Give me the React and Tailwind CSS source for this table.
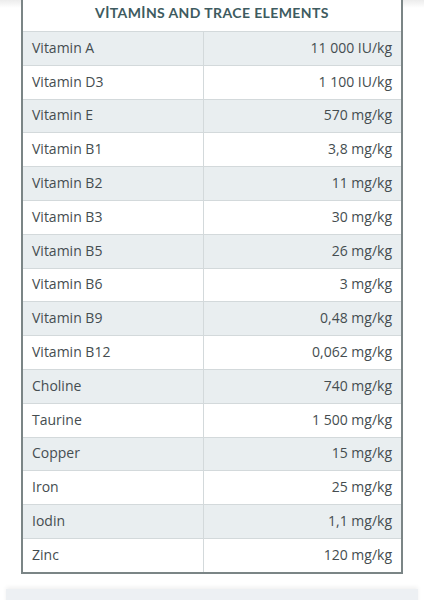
const rows = [
  ["Vitamin A", "11 000 IU/kg"],
  ["Vitamin D3", "1 100 IU/kg"],
  ["Vitamin E", "570 mg/kg"],
  ["Vitamin B1", "3,8 mg/kg"],
  ["Vitamin B2", "11 mg/kg"],
  ["Vitamin B3", "30 mg/kg"],
  ["Vitamin B5", "26 mg/kg"],
  ["Vitamin B6", "3 mg/kg"],
  ["Vitamin B9", "0,48 mg/kg"],
  ["Vitamin B12", "0,062 mg/kg"],
  ["Choline", "740 mg/kg"],
  ["Taurine", "1 500 mg/kg"],
  ["Copper", "15 mg/kg"],
  ["Iron", "25 mg/kg"],
  ["Iodin", "1,1 mg/kg"],
  ["Zinc", "120 mg/kg"],
];

export default function App() {
  return (
    <div className="w-[424px] h-[600px] overflow-hidden bg-white">
      <div className="h-[8px] -mb-[8px] bg-gradient-to-b from-[#ececec] to-white" />
      <div className="ml-[21px] w-[382px] border-x-2 border-b-2 border-[#7b8586] bg-white relative">
        <div
          className="h-[31px] flex items-center justify-center pb-[7px] text-[14px] font-bold tracking-[0.4px] text-[#3e5b60] uppercase"
          style={{ fontFamily: "Lato, sans-serif" }}
        >
          Vİtamİns and trace elements
        </div>
        {rows.map(([name, value], i) => (
          <div
            key={name}
            className={`flex h-[33.8px] border-t border-[#d3d9db] text-[14px] text-[#454d50] ${
              i % 2 === 0 ? "bg-[#e9eef0]" : "bg-white"
            }`}
            style={{ fontFamily: "'Open Sans', sans-serif" }}
          >
            <div className="w-[181px] flex items-center pl-[9px] pb-[2px] border-r border-[#d3d9db]">
              {name}
            </div>
            <div className="flex-1 flex items-center justify-end pr-[9px] pb-[2px]">
              {value}
            </div>
          </div>
        ))}
      </div>
      <div className="mt-[15px] mx-[6px] h-[20px] bg-[#edf0f3] shadow-[0_-2px_4px_rgba(0,0,0,0.06)]" />
    </div>
  );
}
